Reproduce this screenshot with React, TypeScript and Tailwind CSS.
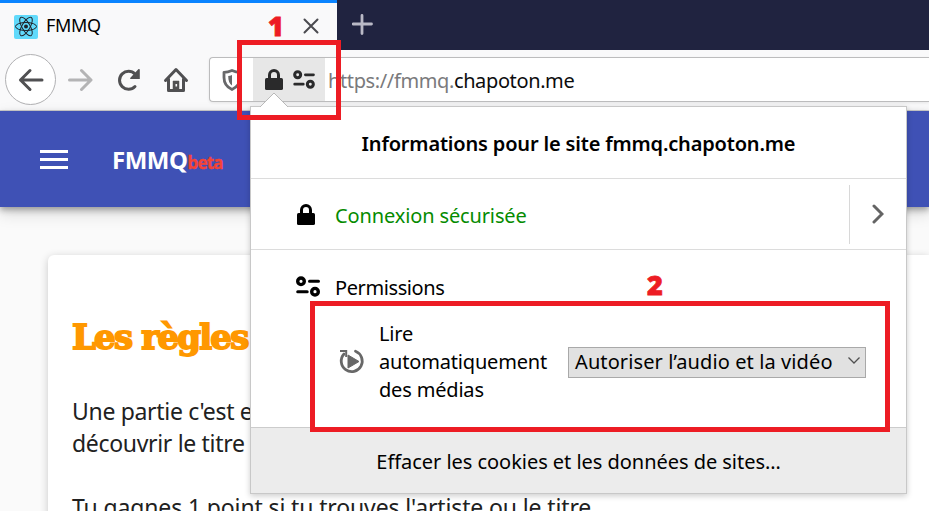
import React from "react";

const Lock = ({ className }: { className: string }) => (
  <svg viewBox="0 0 18 21" className={className} fill="none">
    <rect x="0" y="9" width="18" height="12" rx="1.6" fill="currentColor" />
    <path d="M4.500 10V6a4.500 4.500 0 0 1 9 0V10" stroke="currentColor" strokeWidth="3" />
  </svg>
);

const Sliders = ({ className }: { className: string }) => (
  <svg viewBox="0 0 24 21" className={className} fill="none" stroke="currentColor" strokeWidth="3.4">
    <circle cx="5" cy="5.300" r="3.300" />
    <circle cx="19" cy="15.700" r="3.300" />
    <path d="M13.500 5.300h9M1.700 15.700h9.500" strokeWidth="3" strokeLinecap="round" />
  </svg>
);

const ReactLogo = () => (
  <svg viewBox="0 0 24 24" className="size-6 shrink-0" fill="none" stroke="#20232a" strokeWidth="1">
    <rect width="24" height="24" rx="2" fill="#61dafb" stroke="none" />
    <ellipse cx="12" cy="11.500" rx="10.500" ry="4" />
    <ellipse cx="12" cy="11.500" rx="10.500" ry="4" transform="rotate(60 12 11.500)" />
    <ellipse cx="12" cy="11.500" rx="10.500" ry="4" transform="rotate(120 12 11.500)" />
    <circle cx="12" cy="11.500" r="2" fill="#20232a" stroke="none" />
  </svg>
);

function TabBar() {
  return (
    <div className="flex h-[50px] shrink-0 bg-[#202340]">
      <div className="flex w-[337px] items-center border-t-[3px] border-[#0a84ff] bg-[#f9f9fa] pl-3.5">
        <ReactLogo />
        <span className="-mt-[3px] ml-2 text-[18px] leading-6 tracking-[-0.3px]">FMMQ</span>
        <svg viewBox="0 0 16 16" className="-mt-[2px] ml-auto mr-[18px] size-4" stroke="#4a4a4f" strokeWidth="2" strokeLinecap="round">
          <path d="M1.500 1.500l13 13M14.500 1.500l-13 13" />
        </svg>
      </div>
      <svg viewBox="0 0 21 21" className="ml-[15px] mt-[14px] size-[21px]" stroke="#b9b9c6" strokeWidth="2.800" strokeLinecap="round">
        <path d="M10 1.400v18.200M1 10h18.500" />
      </svg>
    </div>
  );
}

function Toolbar() {
  return (
    <div className="flex h-[61px] shrink-0 items-start border-b border-[#cfcfcf] bg-[#f9f9fa] text-[#505052]">
      <div className="ml-[5px] mt-1 flex size-[51px] shrink-0 items-center justify-center rounded-full border border-[#b1b1b3] bg-white">
        <svg viewBox="0 0 26 24" className="h-6 w-[26px]" fill="none" stroke="currentColor" strokeWidth="3" strokeLinecap="round" strokeLinejoin="round">
          <path d="M24 12H2.500M12 2.500L2.500 12l9.500 9.500" />
        </svg>
      </div>
      <svg viewBox="0 0 26 24" className="ml-[11px] mt-[18px] h-6 w-[26px] shrink-0" fill="none" stroke="#b4b4b5" strokeWidth="3" strokeLinecap="round" strokeLinejoin="round">
        <path d="M2.500 12H23M14.500 2.500L24 12l-9.500 9.500" />
      </svg>
      <svg viewBox="0 0 24 24" className="ml-6 mt-[18px] size-6 shrink-0" fill="none">
        <path d="M18 18.500A9 9 0 1 1 18 6" stroke="currentColor" strokeWidth="3" strokeLinecap="round" />
        <path d="M22.800 1.800V11h-9c-.7 0-.9-.8-.4-1.300L21.300 1.300c.6-.5 1.500-.3 1.500.5z" fill="currentColor" />
      </svg>
      <svg viewBox="0 0 26 26" className="ml-[22px] mt-[17px] size-[26px] shrink-0" fill="none" stroke="currentColor" strokeWidth="3" strokeLinecap="round" strokeLinejoin="round">
        <path d="M2.500 13.500L13 2.500l10.500 11M5.500 12v11.500h15V12" />
        <path d="M10 23v-9h6v9z" fill="currentColor" strokeWidth="0.500" />
        <rect x="12.500" y="17" width="1.600" height="2.500" fill="#f9f9fa" stroke="none" />
      </svg>
      <div className="ml-5 mt-[7px] flex h-[45px] flex-1 items-center rounded-l-[4px] border border-r-0 border-[#bcbcbd] bg-white shadow-[0_1px_3px_rgba(0,0,0,0.08)]">
        <svg viewBox="0 0 20 22" className="ml-3 h-[22px] w-5 shrink-0" fill="none" stroke="#68686a" strokeWidth="2.800">
          <path d="M10 1.500c3 1.300 5.500 1.800 8 1.800v5.200c0 6-3.500 10-8 12-4.500-2-8-6-8-12V3.300c2.500 0 5-.5 8-1.800z" strokeLinejoin="round" />
          <path d="M10 6v10.500c-2.500-1.800-3.800-4.500-3.800-9.500 1.300 0 2.500-.3 3.800-1z" fill="#68686a" stroke="none" />
        </svg>
        <div className="ml-[11px] flex h-full w-[72px] shrink-0 items-center bg-[#e7e7e7] pl-3 text-[#2a2a2b]">
          <Lock className="h-[21px] w-[18px]" />
          <Sliders className="ml-2.5 h-[19px] w-[22px]" />
        </div>
        <div className="ml-[3px] mt-0.5 whitespace-nowrap text-[20px] leading-[28px] tracking-[-0.38px] text-[#7a7a7c]">
          https://fmmq.<span className="text-[#0c0c0d]">chapoton.me</span>
        </div>
      </div>
    </div>
  );
}

function SitePage() {
  return (
    <div className="flex flex-1 flex-col bg-[#fafafa]">
      <header className="z-[1] flex h-24 shrink-0 items-center bg-[#3f51b5] pl-10 shadow-[0_3px_6px_rgba(0,0,0,0.3),0_6px_15px_rgba(0,0,0,0.15)]">
        <div className="flex w-7 flex-col gap-[5px]">
          <div className="h-[3px] bg-white" />
          <div className="h-[3px] bg-white" />
          <div className="h-[3px] bg-white" />
        </div>
        <div className="ml-11 mt-0.5 flex items-baseline font-bold">
          <span className="text-[24px] leading-8 tracking-[-0.5px] text-white">FMMQ</span>
          <span className="text-[17px] tracking-[-0.8px] text-[#f44336] [-webkit-text-stroke:0.4px_#f44336]">beta</span>
        </div>
      </header>
      <main className="ml-12 mt-12 h-[300px] rounded-tl-[6px] bg-white pl-6 shadow-[0_2px_9px_rgba(0,0,0,0.2)]">
        <h1 className="mt-[60px] whitespace-nowrap font-['DejaVu_Serif',serif] text-[34px] font-bold leading-[44px] tracking-[-1.800px] text-[#ff9800] [-webkit-text-stroke:1.800px_#ff9800]">
          Les règles
        </h1>
        <p className="mt-9 whitespace-nowrap text-[23px] leading-8 tracking-[-0.32px] text-[#212121]">
          Une partie c'est e<br />
          découvrir le titre<br />
          <br />
          <span className="tracking-[-0.13px]">Tu gagnes 1 point si tu trouves l'artiste ou le titre</span>
        </p>
      </main>
    </div>
  );
}

function SitePopup() {
  return (
    <div className="absolute left-[250px] top-[106px] z-10 flex h-[388px] w-[657px] flex-col border border-[#c8c8c8] bg-white text-[20px] leading-7 tracking-[-0.18px] text-black shadow-[0_2px_6px_rgba(0,0,0,0.2)]">
      <svg viewBox="0 0 30 16" className="absolute -top-[15px] left-[8px] h-4 w-[30px]">
        <path d="M1 15L15 1l14 14v1H1z" fill="white" />
        <path d="M1 15L15 1l14 14" fill="none" stroke="#b9b9b9" />
      </svg>
      <div className="flex h-[72px] shrink-0 items-center justify-center border-b border-[#dcdcdc] pt-0.5 font-semibold tracking-[-0.17px]">
        Informations pour le site fmmq.chapoton.me
      </div>
      <div className="flex h-[71px] shrink-0 items-center border-b border-[#dcdcdc] pl-[46px]">
        <Lock className="h-[21px] w-[18px]" />
        <span className="ml-5 mt-[3px] tracking-[-0.13px] text-[#058b00]">Connexion sécurisée</span>
        <div className="ml-auto flex h-[59px] w-[57px] items-center justify-center border-l border-[#d8d8d8]">
          <svg viewBox="0 0 12 20" className="h-5 w-3" fill="none" stroke="#646464" strokeWidth="3" strokeLinecap="round">
            <path d="M2 2l8 8-8 8" />
          </svg>
        </div>
      </div>
      <div className="flex min-h-0 flex-1 flex-col">
        <div className="mt-6 flex items-center pl-[45px]">
          <Sliders className="-mt-1 h-[21px] w-6" />
          <span className="ml-[15px] tracking-[-0.4px]">Permissions</span>
        </div>
        <div className="mt-[18px] flex items-center pl-[88px]">
          <svg viewBox="0 0 26 26" className="-mt-0.5 size-[26px]" fill="none" stroke="#686868" strokeWidth="2.800">
            <path d="M16.500 3.300A10.500 10.500 0 1 1 5 6" strokeLinecap="round" />
            <path d="M1 3h6.200v6" strokeWidth="2" />
            <path d="M9 7v13l11-6.500z" fill="#686868" stroke="#686868" strokeWidth="1" strokeLinejoin="round" />
          </svg>
          <div className="ml-3.5 w-[189px]">
            Lire<br />automatiquement<br />des médias
          </div>
          <div className="flex h-[31px] w-[298px] items-center border border-[#a9a9a9] bg-[#e1e1e1] pl-1.5">
            <span className="whitespace-nowrap tracking-[0.100px]">Autoriser l’audio et la vidéo</span>
            <svg viewBox="0 0 12 7" className="mb-1 ml-auto mr-[5px] h-[7px] w-3" fill="none" stroke="#505050" strokeWidth="1.300">
              <path d="M.5.5L6 6 11.500.5" />
            </svg>
          </div>
        </div>
      </div>
      <div className="flex h-[66px] shrink-0 items-center justify-center border-t border-[#cccccc] bg-[#ececec] pt-[3px] tracking-[-0.04px]">
        Effacer les cookies et les données de sites…
      </div>
    </div>
  );
}

export default function App() {
  return (
    <div className="relative flex h-[511px] w-[929px] flex-col overflow-hidden bg-white font-['Noto_Sans','Open_Sans',sans-serif] text-black">
      <TabBar />
      <Toolbar />
      <SitePage />
      <SitePopup />
      <div className="absolute left-[237px] top-[40px] z-20 h-20 w-[104px] border-[5px] border-[#ed1c24]" />
      <div className="absolute left-[310px] top-[301px] z-20 h-[131px] w-[580px] border-[5px] border-[#ed1c24]" />
      <span className="absolute left-[268px] top-[9px] z-20 font-['Open_Sans',sans-serif] text-[27px] font-extrabold leading-[34px] text-[#ed1c24] [-webkit-text-stroke:0.800px_#ed1c24]">1</span>
      <span className="absolute left-[647px] top-[268px] z-20 font-['Open_Sans',sans-serif] text-[27px] font-extrabold leading-[34px] text-[#ed1c24] [-webkit-text-stroke:0.800px_#ed1c24]">2</span>
    </div>
  );
}
